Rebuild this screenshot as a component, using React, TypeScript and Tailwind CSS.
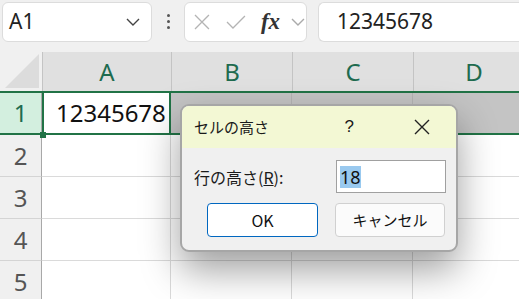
import React from "react";

const font = { fontFamily: '"Noto Sans", "Noto Sans CJK JP", sans-serif' };

function Chevron({ className }: { className?: string }) {
  return (
    <svg width="16" height="10" viewBox="0 0 16 10" className={className}>
      <path d="M2 2 L8 8 L14 2" fill="none" stroke="currentColor" strokeWidth="1.4" />
    </svg>
  );
}

const cols = [
  { name: "A", w: "w-[129px]" },
  { name: "B", w: "w-[121px]" },
  { name: "C", w: "w-[121px]" },
  { name: "D", w: "w-[121px]" },
];

export default function App() {
  return (
    <div className="relative w-[519px] h-[299px] overflow-hidden bg-[#f0f0f0]" style={font}>
      {/* formula bar */}
      <div className="flex items-center h-[42px] pt-px">
        <div className="ml-[2px] w-[150px] shrink-0 h-[40px] bg-white rounded-[6px] border border-[#dcdcdc] flex items-center justify-between pl-[6px] pr-[10px]">
          <span className="text-[21px] text-[#222]">A1</span>
          <Chevron className="text-[#444]" />
        </div>
        <div className="w-[32px] shrink-0 flex flex-col items-center gap-[3px]">
          <span className="w-[3px] h-[3px] bg-[#555] rounded-full" />
          <span className="w-[3px] h-[3px] bg-[#555] rounded-full" />
          <span className="w-[3px] h-[3px] bg-[#555] rounded-full" />
        </div>
        <div className="w-[123px] shrink-0 h-[40px] bg-white rounded-[6px] border border-[#dcdcdc] flex items-center pl-[8px] gap-[14px]">
          <svg width="18" height="18" viewBox="0 0 18 18">
            <path d="M2 2 L16 16 M16 2 L2 16" stroke="#b4b4b4" strokeWidth="1.3" />
          </svg>
          <svg width="22" height="18" viewBox="0 0 22 18">
            <path d="M2 9 L8 15 L20 3" fill="none" stroke="#b4b4b4" strokeWidth="1.3" />
          </svg>
          <span className="text-[23px] italic font-bold text-[#333] leading-none" style={{ fontFamily: '"Liberation Serif", serif' }}>
            fx
          </span>
          <Chevron className="text-[#aaa] -ml-[4px]" />
        </div>
        <div className="ml-[11px] flex-1 h-[40px] bg-white rounded-l-[6px] border border-r-0 border-[#dcdcdc] flex items-center pl-[18px]">
          <span className="text-[21px] text-[#222]">12345678</span>
        </div>
      </div>

      {/* grid */}
      <div className="mt-[10px]">
        {/* column header */}
        <div className="flex h-[41px] border-b-2 border-[#217346]">
          <div className="relative w-[42px] shrink-0 bg-[#f0f0f0]">
            <div className="absolute right-[3px] bottom-[3px] w-0 h-0 border-l-[34px] border-l-transparent border-b-[34px] border-b-[#dcdcdc]" />
          </div>
          {cols.map((c) => (
            <div
              key={c.name}
              className={`${c.w} shrink-0 bg-[#e0e0e0] border-l border-[#c4c4c4] flex items-center justify-center text-[24px] text-[#1e6b4f]`}
            >
              {c.name}
            </div>
          ))}
        </div>

        {/* row 1 */}
        <div className="flex h-[42px] border-b-2 border-[#217346]">
          <div className="w-[42px] shrink-0 bg-[#d3efdf] border-r border-[#a8a8a8] flex items-center justify-center text-[24px] text-[#1e6b4f]">
            1
          </div>
          <div className="relative w-[129px] shrink-0 bg-white flex items-center pl-[14px] text-[24px] text-[#111]">
            12345678
            <div className="absolute inset-y-[-2px] left-0 right-0 border-2 border-[#217346] border-b-0 border-t-0" />
            <div className="absolute left-[-2px] bottom-[-5px] w-[6px] h-[6px] bg-[#217346]" />
          </div>
          <div className="flex-1 bg-[#c4c4c4] flex">
            <div className="w-[121px] shrink-0 border-r border-[#b4b4b4]" />
            <div className="w-[121px] shrink-0 border-r border-[#b4b4b4]" />
          </div>
        </div>

        {[2, 3, 4, 5].map((n) => (
          <div key={n} className="flex h-[42px]">
            <div className="w-[42px] shrink-0 bg-[#f0f0f0] border-r border-[#a8a8a8] border-b border-b-[#d4d4d4] flex items-center justify-center text-[24px] text-[#555]">
              {n}
            </div>
            <div className="flex-1 flex bg-white border-b border-[#dadada]">
              {cols.map((c) => (
                <div key={c.name} className={`${c.w} shrink-0 border-r border-[#dadada]`} />
              ))}
            </div>
          </div>
        ))}
      </div>

      {/* dialog */}
      <div
        className="absolute left-[180px] top-[104px] w-[278px] h-[148px] rounded-[9px] border-2 border-[#a6a6a6] bg-[#f0f0f0] overflow-hidden shadow-[0_18px_38px_rgba(0,0,0,0.38)]"
        style={{ fontFamily: '"Noto Sans CJK JP", sans-serif' }}
      >
        <div className="h-[42px] bg-[#f3f8d4] flex items-center pl-[12px] pr-[26px] text-[#1a1a1a]">
          <span className="text-[15px]">セルの高さ</span>
          <span className="ml-auto mr-[60px] text-[17px]" style={{ fontFamily: '"Liberation Sans", sans-serif' }}>?</span>
          <svg width="16" height="16" viewBox="0 0 16 16">
            <path d="M1 1 L15 15 M15 1 L1 15" stroke="#222" strokeWidth="1.4" />
          </svg>
        </div>
        <div className="flex items-center justify-between pl-[12px] pr-[10px] mt-[12px]">
          <span className="text-[16px] text-[#1a1a1a]">
            行の高さ(<span className="underline">R</span>):
          </span>
          <div className="w-[110px] h-[33px] bg-white border border-[#a0a0a0] flex items-center pl-[3px]">
            <span className="bg-[#99c9ef] text-[18px] leading-[22px] text-[#111]" style={{ fontFamily: '"Noto Sans", sans-serif' }}>18</span>
          </div>
        </div>
        <div className="flex justify-between pl-[25px] pr-[11px] mt-[10px]">
          <div className="w-[111px] h-[34px] bg-white border border-[#0067c0] rounded-[4px] flex items-center justify-center text-[16px] text-[#111]">
            OK
          </div>
          <div className="w-[110px] h-[34px] bg-[#fbfbfb] border border-[#d0d0d0] rounded-[4px] flex items-center justify-center text-[15px] text-[#111]">
            キャンセル
          </div>
        </div>
      </div>
    </div>
  );
}
